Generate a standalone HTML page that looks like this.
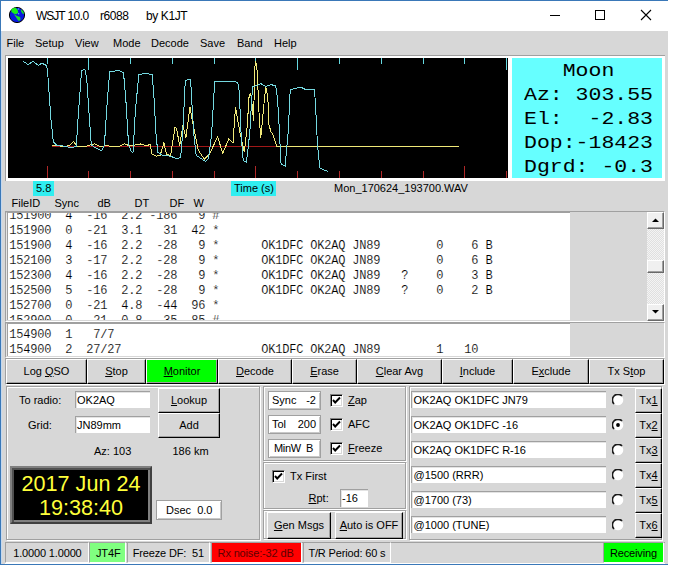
<!DOCTYPE html>
<html><head><meta charset="utf-8"><style>
*{box-sizing:border-box}
html,body{margin:0;padding:0;width:683px;height:565px;overflow:hidden;background:#fff}
.a{position:absolute}
.t{position:absolute;font:11px/11px "Liberation Sans",sans-serif;white-space:pre;color:#000}
.m{position:absolute;font:12px/15px "Liberation Mono",monospace;letter-spacing:-0.2px;white-space:pre;color:#000;-webkit-text-stroke:0.15px #fff}
.btn{position:absolute;background:#d7d7d7;border-top:1px solid #fff;border-left:1px solid #fff;border-right:1px solid #000;border-bottom:1px solid #000;box-shadow:inset -1px -1px 0 #a0a0a0}
.sunk{position:absolute;border-top:1px solid #a0a0a0;border-left:1px solid #a0a0a0;border-right:1px solid #fff;border-bottom:1px solid #fff}
.grp{position:absolute;border:1px solid #a0a0a0;box-shadow:1px 1px 0 #fff, inset 1px 1px 0 #fff}
.inp{position:absolute;background:#fff;border-top:1px solid #a0a0a0;border-left:1px solid #a0a0a0;border-right:1px solid #fff;border-bottom:1px solid #fff}
.u{text-decoration:underline;text-underline-offset:1px}
.chk{position:absolute;width:13px;height:13px;background:#fff;border-top:1px solid #808080;border-left:1px solid #808080;border-right:1px solid #fff;border-bottom:1px solid #fff;box-shadow:inset 1px 1px 0 #000, inset -1px -1px 0 #d7d7d7}
.rad{position:absolute;width:12px;height:12px;border-radius:50%;background:#fff;border:1px solid;border-color:#808080 #fff #fff #808080}
</style></head><body>
<div class="a" style="left:0px;top:0px;width:668px;height:565px;background:#d7d7d7;border-left:1px solid #3a78b8;border-top:1px solid #3a78b8;border-bottom:1px solid #3a78b8"></div>
<div class="a" style="left:1px;top:1px;width:667px;height:30px;background:#fff"></div>
<div class="a" style="left:1px;top:31px;width:1px;height:533px;background:#c4d8ee"></div>
<svg class="a" style="left:0;top:0" width="30" height="30" viewBox="0 0 30 30"><circle cx="17" cy="15" r="7.6" fill="#0818e0" stroke="#000" stroke-width="1"/><path d="M11.3 8.9 L15.3 7.6 L17.5 9.6 L18.3 12.6 L16.3 14.2 L14 13.8 L11.5 12 Z" fill="#18f018"/><path d="M13.8 14 L16.6 15.8 L20.1 17 L20.6 19.2 L19 21.3 L17.6 19.7 L15.5 16.6 Z" fill="#18e028"/><path d="M21 9.2 L23.4 11.5 L24 14.3 L22.3 13.4 L21 11 Z" fill="#18e028"/><circle cx="18.6" cy="9" r="0.8" fill="#60a0ff"/><circle cx="18.6" cy="13.8" r="0.8" fill="#60a0ff"/></svg>
<div class="t" style="left:36px;top:10px;font-size:12px;line-height:12px;letter-spacing:-1px">WSJT</div>
<div class="t" style="left:67.5px;top:10px;font-size:12px;line-height:12px;letter-spacing:-0.6px">10.0</div>
<div class="t" style="left:100px;top:10px;font-size:12px;line-height:12px;letter-spacing:-0.45px">r6088</div>
<div class="t" style="left:146px;top:10px;font-size:12px;line-height:12px;letter-spacing:-0.4px">by K1JT</div>
<div class="a" style="left:550px;top:15px;width:10px;height:1px;background:#000"></div>
<div class="a" style="left:595px;top:10px;width:10px;height:10px;border:1px solid #000"></div>
<svg class="a" style="left:640px;top:9px" width="12" height="12" viewBox="0 0 12 12"><path d="M1 1 L11 11 M11 1 L1 11" stroke="#000" stroke-width="1.1"/></svg>
<div class="t" style="left:6.5px;top:38px;">File</div>
<div class="t" style="left:35px;top:38px;">Setup</div>
<div class="t" style="left:75px;top:38px;">View</div>
<div class="t" style="left:113px;top:38px;">Mode</div>
<div class="t" style="left:151px;top:38px;">Decode</div>
<div class="t" style="left:200px;top:38px;">Save</div>
<div class="t" style="left:237px;top:38px;">Band</div>
<div class="t" style="left:274px;top:38px;">Help</div>
<div class="a" style="left:5px;top:55px;width:660px;height:126px;background:#fff;border-top:1px solid #a0a0a0;border-left:1px solid #a0a0a0"></div>
<div class="a" style="left:8px;top:58px;width:500px;height:120px;background:#000"></div>
<div class="a" style="left:512px;top:58px;width:150px;height:120px;background:#66ffff"></div>
<svg class="a" style="left:0;top:0" width="683" height="565" viewBox="0 0 683 565"><defs><clipPath id="pc"><rect x="8" y="58" width="500" height="120"/></clipPath></defs><g clip-path="url(#pc)"><rect x="47" y="58" width="1" height="6" fill="#66d8e0"/><rect x="47" y="166" width="1" height="12" fill="#b02828"/><rect x="88" y="58" width="1" height="12" fill="#66d8e0"/><rect x="88" y="171" width="1" height="7" fill="#b02828"/><rect x="130" y="58" width="1" height="6" fill="#66d8e0"/><rect x="130" y="171" width="1" height="7" fill="#b02828"/><rect x="172" y="58" width="1" height="6" fill="#66d8e0"/><rect x="172" y="171" width="1" height="7" fill="#b02828"/><rect x="214" y="58" width="1" height="6" fill="#66d8e0"/><rect x="214" y="171" width="1" height="7" fill="#b02828"/><rect x="255" y="58" width="1" height="6" fill="#66d8e0"/><rect x="255" y="166" width="1" height="12" fill="#b02828"/><rect x="297" y="58" width="1" height="12" fill="#66d8e0"/><rect x="297" y="171" width="1" height="7" fill="#b02828"/><rect x="339" y="58" width="1" height="6" fill="#66d8e0"/><rect x="339" y="171" width="1" height="7" fill="#b02828"/><rect x="381" y="58" width="1" height="6" fill="#66d8e0"/><rect x="381" y="171" width="1" height="7" fill="#b02828"/><rect x="423" y="58" width="1" height="6" fill="#66d8e0"/><rect x="423" y="171" width="1" height="7" fill="#b02828"/><rect x="464" y="58" width="1" height="6" fill="#66d8e0"/><rect x="464" y="166" width="1" height="12" fill="#b02828"/><rect x="506" y="58" width="1" height="12" fill="#66d8e0"/><rect x="506" y="171" width="1" height="7" fill="#b02828"/><rect x="52" y="146" width="225" height="1" fill="#a01818"/><polyline points="52.2,145 60,146 66,146.5 70,145 73.6,141.6 77,146 85,146.5 90,145 94.7,143.9 99,146 103,146.5 106.2,145 110,146.5 120,146 124.6,143.9 130,146 141.1,143.9 147,146 150,144 152,154.2 156.1,156.2 160.2,155.2 163.9,142.9 166.4,154.2 170.5,155.8 175,127.5 176.6,128.6 179.7,146 182.8,125.5 185.9,137.8 190,107 192,119.3 198.2,150.1 204.3,159.3 209.4,154.2 217.6,136.8 222.7,153.2 228.9,138.8 233,142.9 235.5,107 238.6,125 240.2,133.7 244.3,152.1 247.3,125 249.2,94.7 250.4,93.4 251.6,98.4 252.9,114.5 253.7,120.7 254.5,69.9 255.7,61.2 257.5,73.6 258.5,104.6 260.7,137.8 262.5,120 264.7,95.9 265.9,87.5 267.8,97.1 269,125 270.9,131.6 273,134.7 277,146.5 459,146.5" fill="none" stroke="#f0e878" stroke-width="1" shape-rendering="crispEdges"/><polyline points="23.2,61.3 28.2,64.6 33.1,61.3 38.4,65.5 41.7,63.2 46.6,65.5 47.5,70 48.7,87.5 51,119.7 53.3,141.6 56.8,145.5 64.8,146.2 71.7,147.8 76.3,146.2 78.6,110.5 81.6,70.3 85,69.6 86.7,78.3 89,112.8 91.3,145 94.7,147.3 101.6,150.8 104.4,145 107.4,99 109.7,71.9 118.9,70.3 123.5,72.6 125.8,99 128.6,145 131.6,152 133,152.4 135.4,110.5 138.8,74.9 145.7,73.2 152.2,74.9 154.1,99 156.1,135.7 157.8,152.1 162.3,155.2 170.5,156.2 176.6,158.7 180.7,157.3 182.8,131.6 185.3,80.2 190.6,79.5 192,105 194,135.7 196.1,155.2 205.3,161.4 208.4,158.7 211.5,135.7 214.7,81.8 219.3,81.1 225,81.3 228.7,82 231.2,81.3 236.2,82 238,83.5 239.3,92.2 241.2,135.7 243.2,160.3 246.3,162.4 248.4,146 250.4,125 251.6,98.4 252.9,86.6 257.2,85.4 261,83.7 265.9,86.6 270.8,84.5 275.8,86 277,94.7 278.3,110.8 281.1,164.4 285.2,166 286.9,146 288.8,125 289.4,97.1 290.7,89.7 295,88.5 300.2,87 304.8,89.1 314,89.1 315.2,99 317.5,145 319.8,168 327.8,171.5" fill="none" stroke="#74d8e0" stroke-width="1" shape-rendering="crispEdges"/></g></svg>
<div class="a" style="left:524px;top:59px;font:21.5px/21px 'Liberation Mono',monospace;white-space:pre;color:#000;transform:scaleY(0.86);transform-origin:0 100%">   Moon</div>
<div class="a" style="left:524px;top:83px;font:21.5px/21px 'Liberation Mono',monospace;white-space:pre;color:#000;transform:scaleY(0.86);transform-origin:0 100%">Az: 303.55</div>
<div class="a" style="left:524px;top:107px;font:21.5px/21px 'Liberation Mono',monospace;white-space:pre;color:#000;transform:scaleY(0.86);transform-origin:0 100%">El:  -2.83</div>
<div class="a" style="left:524px;top:131px;font:21.5px/21px 'Liberation Mono',monospace;white-space:pre;color:#000;transform:scaleY(0.86);transform-origin:0 100%">Dop:-18423</div>
<div class="a" style="left:524px;top:155px;font:21.5px/21px 'Liberation Mono',monospace;white-space:pre;color:#000;transform:scaleY(0.86);transform-origin:0 100%">Dgrd: -0.3</div>
<div class="a" style="left:33px;top:181px;width:21px;height:15px;background:#30eef0"></div>
<div class="t" style="left:36px;top:183px;">5.8</div>
<div class="a" style="left:231px;top:181px;width:45px;height:15px;background:#30eef0"></div>
<div class="t" style="left:234px;top:183px;">Time (s)</div>
<div class="t" style="left:334px;top:183px;">Mon_170624_193700.WAV</div>
<div class="t" style="left:11.5px;top:198px;">FileID</div>
<div class="t" style="left:54.5px;top:198px;">Sync</div>
<div class="t" style="left:97.5px;top:198px;">dB</div>
<div class="t" style="left:134.5px;top:198px;">DT</div>
<div class="t" style="left:169.5px;top:198px;">DF</div>
<div class="t" style="left:193.5px;top:198px;">W</div>
<div class="a" style="left:5px;top:211px;width:660px;height:111px;background:#d7d7d7;border-top:1px solid #a0a0a0;border-left:1px solid #a0a0a0;border-right:1px solid #fff;border-bottom:1px solid #fff"></div>
<div class="a" style="left:6px;top:212px;width:564px;height:108px;background:#fff;border-top:1px solid #a0a0a0;border-left:1px solid #e6e6e6;box-shadow:inset 1px 0 0 #a0a0a0;overflow:hidden">
<div class="m" style="left:2.3px;top:-4px">151900  4  -16  2.2 -186   9 #
151900  0  -21  3.1   31  42 *
151900  4  -16  2.2  -28   9 *      OK1DFC OK2AQ JN89        0    6 B
152100  3  -17  2.2  -28   9 *      OK1DFC OK2AQ JN89        0    6 B
152300  4  -16  2.2  -28   9 *      OK1DFC OK2AQ JN89   ?    0    3 B
152500  5  -16  2.2  -28   9 *      OK1DFC OK2AQ JN89   ?    0    2 B
152700  0  -21  4.8  -44  96 *
152900  0  -21  0.8  -35  85 #</div></div>
<div class="a" style="left:647px;top:212px;width:17px;height:109px;background:repeating-conic-gradient(#f4f4f4 0 25%, #e0e0e0 0 50%) 0 0/2px 2px"></div>
<div class="a" style="left:647px;top:212px;width:17px;height:17px;background:#f0f0f0;border-top:1px solid #fff;border-left:1px solid #fff;border-right:1px solid #696969;border-bottom:1px solid #696969;box-shadow:inset -1px -1px 0 #a0a0a0"></div>
<div class="a" style="left:647px;top:304px;width:17px;height:17px;background:#f0f0f0;border-top:1px solid #fff;border-left:1px solid #fff;border-right:1px solid #696969;border-bottom:1px solid #696969;box-shadow:inset -1px -1px 0 #a0a0a0"></div>
<div class="a" style="left:647px;top:260px;width:17px;height:13px;background:#f0f0f0;border-top:1px solid #fff;border-left:1px solid #fff;border-right:1px solid #696969;border-bottom:1px solid #696969;box-shadow:inset -1px -1px 0 #a0a0a0"></div>
<svg class="a" style="left:647px;top:212px" width="17" height="109"><path d="M5 10 L12 10 L8.5 6.5 Z" fill="#000"/><path d="M5 98 L12 98 L8.5 101.5 Z" fill="#000"/></svg>
<div class="a" style="left:5px;top:322px;width:660px;height:36px;background:#d7d7d7;border-top:1px solid #a0a0a0;border-left:1px solid #a0a0a0;border-right:1px solid #fff;border-bottom:1px solid #fff"></div>
<div class="a" style="left:6px;top:323px;width:564px;height:33px;background:#fff;border-top:1px solid #a0a0a0;border-left:1px solid #e6e6e6;box-shadow:inset 1px 0 0 #a0a0a0;overflow:hidden">
<div class="m" style="left:2.3px;top:4px">154900  1   7/7
154900  2  27/27                    OK1DFC OK2AQ JN89        1   10</div></div>
<div class="a" style="left:5px;top:358px;width:660px;height:27px;border-top:1px solid #a0a0a0;border-left:1px solid #a0a0a0;border-right:1px solid #fff;border-bottom:1px solid #fff"></div>
<div class="btn" style="left:6px;top:359px;width:81px;height:25px;"><div class="t" style="left:0;width:79px;text-align:center;top:6px">Log <span class="u">Q</span>SO</div></div>
<div class="btn" style="left:87px;top:359px;width:59px;height:25px;"><div class="t" style="left:0;width:57px;text-align:center;top:6px"><span class="u">S</span>top</div></div>
<div class="btn" style="left:146px;top:359px;width:72px;height:25px;background:#00ff00;"><div class="t" style="left:0;width:70px;text-align:center;top:6px"><span class="u">M</span>onitor</div></div>
<div class="btn" style="left:218px;top:359px;width:74px;height:25px;"><div class="t" style="left:0;width:72px;text-align:center;top:6px"><span class="u">D</span>ecode</div></div>
<div class="btn" style="left:292px;top:359px;width:65px;height:25px;"><div class="t" style="left:0;width:63px;text-align:center;top:6px"><span class="u">E</span>rase</div></div>
<div class="btn" style="left:357px;top:359px;width:85px;height:25px;"><div class="t" style="left:0;width:83px;text-align:center;top:6px"><span class="u">C</span>lear Avg</div></div>
<div class="btn" style="left:442px;top:359px;width:71px;height:25px;"><div class="t" style="left:0;width:69px;text-align:center;top:6px"><span class="u">I</span>nclude</div></div>
<div class="btn" style="left:513px;top:359px;width:76px;height:25px;"><div class="t" style="left:0;width:74px;text-align:center;top:6px">E<span class="u">x</span>clude</div></div>
<div class="btn" style="left:589px;top:359px;width:75px;height:25px;"><div class="t" style="left:0;width:73px;text-align:center;top:6px">Tx S<span class="u">t</span>op</div></div>
<div class="a" style="left:7px;top:387px;width:254px;height:154px;border:1px solid #fff"></div>
<div class="a" style="left:6px;top:386px;width:254px;height:154px;border:1px solid #a0a0a0"></div>
<div class="a" style="left:264px;top:387px;width:143px;height:75px;border:1px solid #fff"></div>
<div class="a" style="left:263px;top:386px;width:143px;height:75px;border:1px solid #a0a0a0"></div>
<div class="a" style="left:264px;top:463px;width:143px;height:47px;border:1px solid #fff"></div>
<div class="a" style="left:263px;top:462px;width:143px;height:47px;border:1px solid #a0a0a0"></div>
<div class="a" style="left:264px;top:511px;width:143px;height:29px;border:1px solid #fff"></div>
<div class="a" style="left:263px;top:510px;width:143px;height:29px;border:1px solid #a0a0a0"></div>
<div class="a" style="left:410px;top:387px;width:253px;height:154px;border:1px solid #fff"></div>
<div class="a" style="left:409px;top:386px;width:253px;height:154px;border:1px solid #a0a0a0"></div>
<div class="t" style="left:19px;top:395px;">To radio:</div>
<div class="a" style="left:75px;top:391px;width:75px;height:17px;background:#fff;border-top:1px solid #a0a0a0;border-left:1px solid #a0a0a0;box-shadow:inset 1px 1px 0 #e3e3e3"></div>
<div class="t" style="left:77px;top:395px;">OK2AQ</div>
<div class="t" style="left:28px;top:420px;">Grid:</div>
<div class="a" style="left:75px;top:416px;width:75px;height:17px;background:#fff;border-top:1px solid #a0a0a0;border-left:1px solid #a0a0a0;box-shadow:inset 1px 1px 0 #e3e3e3"></div>
<div class="t" style="left:77px;top:420px;">JN89mm</div>
<div class="btn" style="left:158px;top:388px;width:62px;height:25px;"><div class="t" style="left:0;width:60px;text-align:center;top:6px"><span class="u">L</span>ookup</div></div>
<div class="btn" style="left:158px;top:413px;width:62px;height:25px;"><div class="t" style="left:0;width:60px;text-align:center;top:6px">Add</div></div>
<div class="t" style="left:94px;top:446px;">Az: 103</div>
<div class="t" style="left:172.5px;top:446px;">186 km</div>
<div class="a" style="left:10px;top:466px;width:142px;height:58px;background:#000;border:2px solid;border-color:#808080 #404040 #404040 #808080;box-shadow:inset 2px 2px 0 #505050, inset -2px -2px 0 #808080"></div>
<div class="a" style="left:10px;width:142px;top:471.5px;text-align:center;font:21.6px/24px 'Liberation Sans',sans-serif;color:#ffff3a;white-space:pre">2017 Jun 24
19:38:40</div>
<div class="a" style="left:156px;top:500px;width:66px;height:20px;background:#fff;border:1px solid #a0a0a0;box-shadow:inset 1px 1px 0 #fff, inset -1px -1px 0 #c8c8c8"></div>
<div class="t" style="left:166px;top:505px;">Dsec  0.0</div>
<div class="a" style="left:268px;top:391px;width:53px;height:19px;background:#fff;border:1px solid #a0a0a0;box-shadow:inset 1px 1px 0 #fff, inset -1px -1px 0 #c8c8c8"></div>
<div class="a" style="left:268px;top:415px;width:53px;height:19px;background:#fff;border:1px solid #a0a0a0;box-shadow:inset 1px 1px 0 #fff, inset -1px -1px 0 #c8c8c8"></div>
<div class="a" style="left:268px;top:439px;width:53px;height:19px;background:#fff;border:1px solid #a0a0a0;box-shadow:inset 1px 1px 0 #fff, inset -1px -1px 0 #c8c8c8"></div>
<div class="t" style="left:272px;top:395px;">Sync</div>
<div class="t" style="left:306.2px;top:395px;">-2</div>
<div class="t" style="left:272px;top:419px;">Tol</div>
<div class="t" style="left:297.7px;top:419px;">200</div>
<div class="t" style="left:274px;top:443px;letter-spacing:-0.3px">MinW</div>
<div class="t" style="left:306px;top:443px;">B</div>
<div class="a" style="left:330px;top:394px;width:13px;height:13px;background:#fff;border-top:1px solid #808080;border-left:1px solid #808080;border-right:1px solid #fff;border-bottom:1px solid #fff;box-shadow:inset 1px 1px 0 #000, inset -1px -1px 0 #d7d7d7"></div>
<svg class="a" style="left:330px;top:394px" width="13" height="13"><path d="M3 6 L5.2 8.5 L10 3.5" fill="none" stroke="#000" stroke-width="1.9"/></svg>
<div class="t" style="left:348px;top:395px;"><span class="u">Z</span>ap</div>
<div class="a" style="left:330px;top:418px;width:13px;height:13px;background:#fff;border-top:1px solid #808080;border-left:1px solid #808080;border-right:1px solid #fff;border-bottom:1px solid #fff;box-shadow:inset 1px 1px 0 #000, inset -1px -1px 0 #d7d7d7"></div>
<svg class="a" style="left:330px;top:418px" width="13" height="13"><path d="M3 6 L5.2 8.5 L10 3.5" fill="none" stroke="#000" stroke-width="1.9"/></svg>
<div class="t" style="left:348px;top:419px;">AFC</div>
<div class="a" style="left:330px;top:442px;width:13px;height:13px;background:#fff;border-top:1px solid #808080;border-left:1px solid #808080;border-right:1px solid #fff;border-bottom:1px solid #fff;box-shadow:inset 1px 1px 0 #000, inset -1px -1px 0 #d7d7d7"></div>
<svg class="a" style="left:330px;top:442px" width="13" height="13"><path d="M3 6 L5.2 8.5 L10 3.5" fill="none" stroke="#000" stroke-width="1.9"/></svg>
<div class="t" style="left:348px;top:443px;"><span class="u">F</span>reeze</div>
<div class="a" style="left:272px;top:470px;width:13px;height:13px;background:#fff;border-top:1px solid #808080;border-left:1px solid #808080;border-right:1px solid #fff;border-bottom:1px solid #fff;box-shadow:inset 1px 1px 0 #000, inset -1px -1px 0 #d7d7d7"></div>
<svg class="a" style="left:272px;top:470px" width="13" height="13"><path d="M3 6 L5.2 8.5 L10 3.5" fill="none" stroke="#000" stroke-width="1.9"/></svg>
<div class="t" style="left:290px;top:471px;">Tx First</div>
<div class="t" style="left:308.5px;top:493px;"><span class="u">R</span>pt:</div>
<div class="a" style="left:340px;top:489px;width:28px;height:18px;background:#fff;border-top:1px solid #a0a0a0;border-left:1px solid #a0a0a0;box-shadow:inset 1px 1px 0 #e3e3e3"></div>
<div class="t" style="left:342px;top:493px;">-16</div>
<div class="btn" style="left:267px;top:512px;width:64px;height:27px;"><div class="t" style="left:0;width:62px;text-align:center;top:7px"><span class="u">G</span>en Msgs</div></div>
<div class="btn" style="left:335px;top:512px;width:68px;height:27px;"><div class="t" style="left:0;width:66px;text-align:center;top:7px"><span class="u">A</span>uto is OFF</div></div>
<div class="a" style="left:411px;top:391px;width:195px;height:17px;background:#fff;border-top:1px solid #a0a0a0;border-left:1px solid #a0a0a0;box-shadow:inset 1px 1px 0 #e3e3e3"></div>
<div class="t" style="left:413.5px;top:395px;">OK2AQ OK1DFC JN79</div>
<svg class="a" style="left:612px;top:394px" width="12" height="12" viewBox="0 0 12 12"><circle cx="6" cy="6" r="5.3" fill="#fff"/><path d="M10 2 A5 5 0 0 0 2 10" fill="none" stroke="#1a1a1a" stroke-width="1.7"/></svg>
<div class="btn" style="left:635px;top:388px;width:27px;height:25px;"><div class="t" style="left:0;width:25px;text-align:center;top:6px">Tx<span class="u">1</span></div></div>
<div class="a" style="left:411px;top:416px;width:195px;height:17px;background:#fff;border-top:1px solid #a0a0a0;border-left:1px solid #a0a0a0;box-shadow:inset 1px 1px 0 #e3e3e3"></div>
<div class="t" style="left:413.5px;top:420px;">OK2AQ OK1DFC -16</div>
<svg class="a" style="left:612px;top:419px" width="12" height="12" viewBox="0 0 12 12"><circle cx="6" cy="6" r="5.3" fill="#fff"/><path d="M10 2 A5 5 0 0 0 2 10" fill="none" stroke="#1a1a1a" stroke-width="1.7"/><circle cx="6" cy="6" r="1.9" fill="#000"/></svg>
<div class="btn" style="left:635px;top:413px;width:27px;height:25px;"><div class="t" style="left:0;width:25px;text-align:center;top:6px">Tx<span class="u">2</span></div></div>
<div class="a" style="left:411px;top:441px;width:195px;height:17px;background:#fff;border-top:1px solid #a0a0a0;border-left:1px solid #a0a0a0;box-shadow:inset 1px 1px 0 #e3e3e3"></div>
<div class="t" style="left:413.5px;top:445px;">OK2AQ OK1DFC R-16</div>
<svg class="a" style="left:612px;top:444px" width="12" height="12" viewBox="0 0 12 12"><circle cx="6" cy="6" r="5.3" fill="#fff"/><path d="M10 2 A5 5 0 0 0 2 10" fill="none" stroke="#1a1a1a" stroke-width="1.7"/></svg>
<div class="btn" style="left:635px;top:438px;width:27px;height:25px;"><div class="t" style="left:0;width:25px;text-align:center;top:6px">Tx<span class="u">3</span></div></div>
<div class="a" style="left:411px;top:466px;width:195px;height:17px;background:#fff;border-top:1px solid #a0a0a0;border-left:1px solid #a0a0a0;box-shadow:inset 1px 1px 0 #e3e3e3"></div>
<div class="t" style="left:413.5px;top:470px;">@1500 (RRR)</div>
<svg class="a" style="left:612px;top:469px" width="12" height="12" viewBox="0 0 12 12"><circle cx="6" cy="6" r="5.3" fill="#fff"/><path d="M10 2 A5 5 0 0 0 2 10" fill="none" stroke="#1a1a1a" stroke-width="1.7"/></svg>
<div class="btn" style="left:635px;top:463px;width:27px;height:25px;"><div class="t" style="left:0;width:25px;text-align:center;top:6px">Tx<span class="u">4</span></div></div>
<div class="a" style="left:411px;top:491px;width:195px;height:17px;background:#fff;border-top:1px solid #a0a0a0;border-left:1px solid #a0a0a0;box-shadow:inset 1px 1px 0 #e3e3e3"></div>
<div class="t" style="left:413.5px;top:495px;">@1700 (73)</div>
<svg class="a" style="left:612px;top:494px" width="12" height="12" viewBox="0 0 12 12"><circle cx="6" cy="6" r="5.3" fill="#fff"/><path d="M10 2 A5 5 0 0 0 2 10" fill="none" stroke="#1a1a1a" stroke-width="1.7"/></svg>
<div class="btn" style="left:635px;top:488px;width:27px;height:25px;"><div class="t" style="left:0;width:25px;text-align:center;top:6px">Tx<span class="u">5</span></div></div>
<div class="a" style="left:411px;top:516px;width:195px;height:17px;background:#fff;border-top:1px solid #a0a0a0;border-left:1px solid #a0a0a0;box-shadow:inset 1px 1px 0 #e3e3e3"></div>
<div class="t" style="left:413.5px;top:520px;">@1000 (TUNE)</div>
<svg class="a" style="left:612px;top:519px" width="12" height="12" viewBox="0 0 12 12"><circle cx="6" cy="6" r="5.3" fill="#fff"/><path d="M10 2 A5 5 0 0 0 2 10" fill="none" stroke="#1a1a1a" stroke-width="1.7"/></svg>
<div class="btn" style="left:635px;top:513px;width:27px;height:25px;"><div class="t" style="left:0;width:25px;text-align:center;top:6px">Tx<span class="u">6</span></div></div>
<div class="a" style="left:5px;top:542px;width:660px;height:22px;border-top:1px solid #a0a0a0;border-bottom:1px solid #fff"></div>
<div class="a" style="left:5px;top:542px;width:84px;height:21px;border-top:1px solid #a0a0a0;border-left:1px solid #a0a0a0;border-right:1px solid #fff;border-bottom:1px solid #fff;"></div>
<div class="t" style="left:13.2px;top:548px;color:#000;letter-spacing:-0.15px">1.0000 1.0000</div>
<div class="a" style="left:89px;top:542px;width:37px;height:21px;border-top:1px solid #a0a0a0;border-left:1px solid #a0a0a0;border-right:1px solid #fff;border-bottom:1px solid #fff;background:#80ff80;"></div>
<div class="t" style="left:96px;top:548px;color:#000;letter-spacing:-0.15px">JT4F</div>
<div class="a" style="left:127px;top:542px;width:83px;height:21px;border-top:1px solid #a0a0a0;border-left:1px solid #a0a0a0;border-right:1px solid #fff;border-bottom:1px solid #fff;"></div>
<div class="t" style="left:132.7px;top:548px;color:#000;letter-spacing:-0.15px">Freeze DF:  51</div>
<div class="a" style="left:211px;top:542px;width:91px;height:21px;border-top:1px solid #a0a0a0;border-left:1px solid #a0a0a0;border-right:1px solid #fff;border-bottom:1px solid #fff;background:#ff0000;"></div>
<div class="t" style="left:217.6px;top:548px;color:#600000;letter-spacing:-0.15px">Rx noise:-32 dB</div>
<div class="a" style="left:303px;top:542px;width:88px;height:21px;border-top:1px solid #a0a0a0;border-left:1px solid #a0a0a0;border-right:1px solid #fff;border-bottom:1px solid #fff;"></div>
<div class="t" style="left:308.4px;top:548px;color:#000;letter-spacing:-0.15px">T/R Period: 60 s</div>
<div class="a" style="left:603px;top:542px;width:61px;height:21px;border-top:1px solid #a0a0a0;border-left:1px solid #a0a0a0;border-right:1px solid #fff;border-bottom:1px solid #fff;background:#00ff00;"></div>
<div class="t" style="left:610px;top:548px;color:#000;letter-spacing:-0.15px">Receiving</div>
</body></html>
